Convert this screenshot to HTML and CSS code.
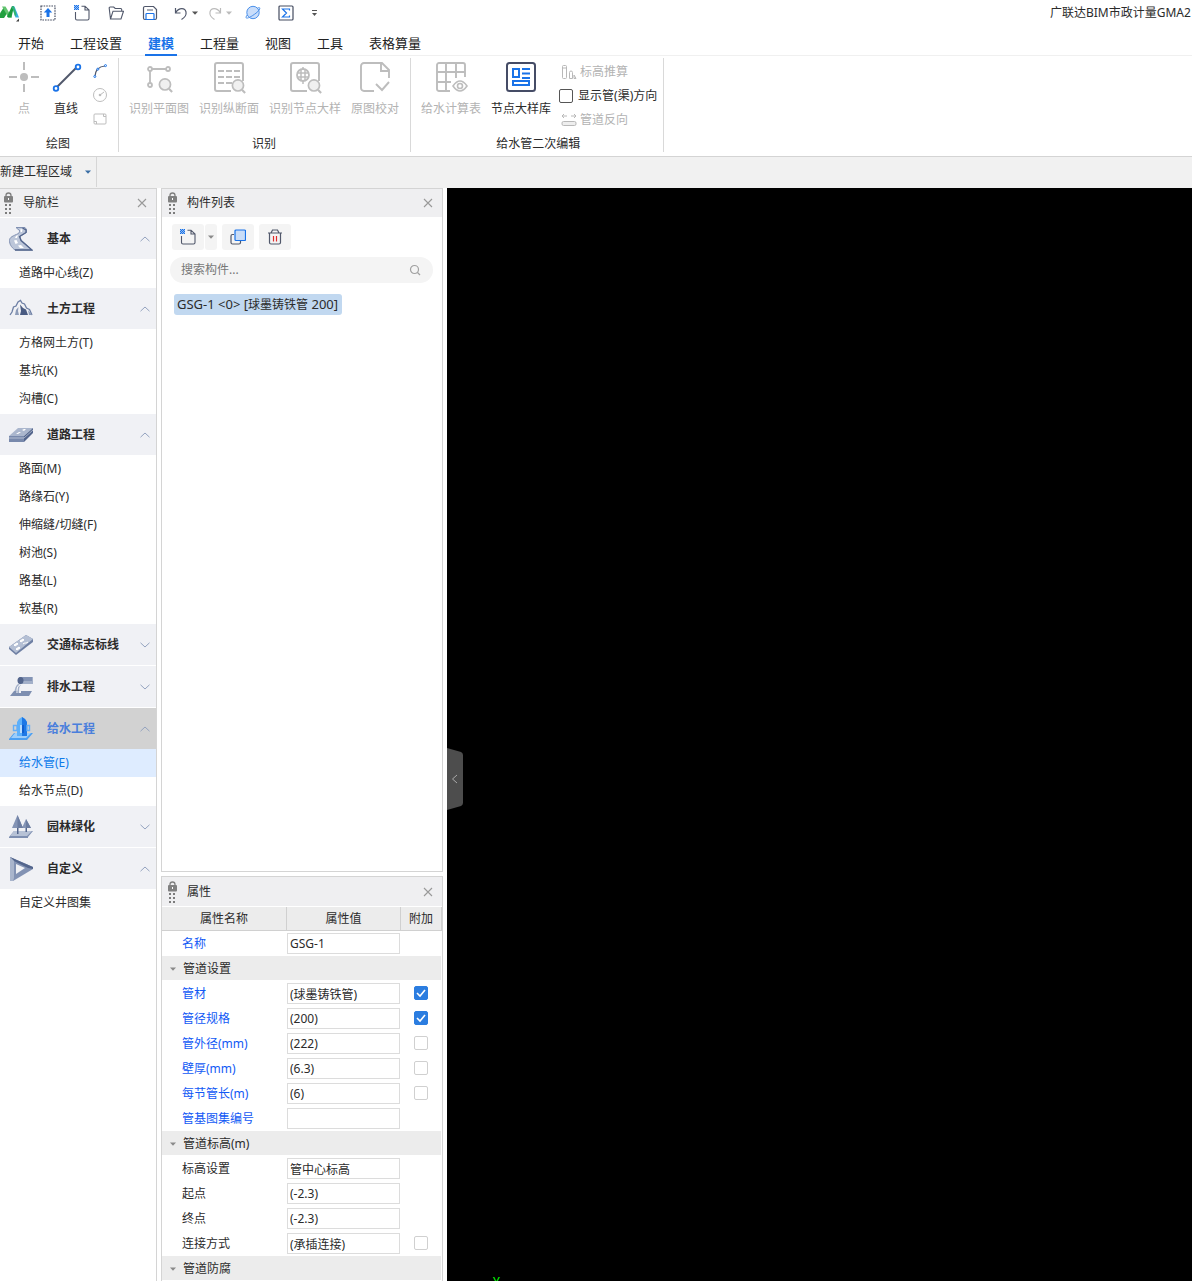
FILE: index.html
```html
<!DOCTYPE html>
<html lang="zh-CN">
<head>
<meta charset="utf-8">
<title>广联达BIM市政计量</title>
<link rel="stylesheet" href="styles.css">
</head>
<body>
<svg class="sprite" aria-hidden="true">
  <symbol id="caret" viewBox="0 0 6 4"><path d="M0 0.5h6L3 3.8z" fill="currentColor"/></symbol>
  <symbol id="close" viewBox="0 0 10 10"><path d="M1 1l8 8M9 1l-8 8" stroke="#999" stroke-width="1.1" fill="none"/></symbol>
  <symbol id="up" viewBox="0 0 10 6"><path d="M0.5 5.2L5 1l4.500 4.200" stroke="#94a3bf" fill="none"/></symbol>
  <symbol id="down" viewBox="0 0 10 6"><path d="M0.500 0.800L5 5l4.500-4.200" stroke="#94a3bf" fill="none"/></symbol>
  <symbol id="grip" viewBox="0 0 9 22">
    <path d="M2 5V3.500a2.500 2.500 0 0 1 5 0V5" stroke="#808080" stroke-width="1.300" fill="none"/>
    <rect x="0" y="4" width="9" height="6.500" rx="1" fill="#808080"/><rect x="4" y="6" width="1" height="2" fill="#fff"/>
    <path d="M1 12h2v2H1zM5 12h2v2H5zM1 16h2v2H1zM5 16h2v2H5zM1 20h2v2H1zM5 20h2v2H5z" fill="#7c7c7c"/>
  </symbol>
  <symbol id="new" viewBox="0 0 16 16">
    <path d="M1.500 7v6.500a1.500 1.500 0 0 0 1.500 1.500h10.500a1.500 1.500 0 0 0 1.500-1.500V5L11 1.200H7.500M11 1.200V5h4" stroke="#51586b" stroke-width="1.100" fill="none"/>
    <path d="M0 0h1v1H0zM2 0h1v1H2zM4 0h1v1H4zM1 1h1v1H1zM3 1h1v1H3zM0 2h1v1H0zM2 2h1v1H2zM4 2h1v1H4zM1 3h1v1H1zM3 3h1v1H3zM0 4h1v1H0zM2 4h1v1H2zM4 4h1v1H4z" fill="#1a73e8"/>
    <path d="M0 0h5v5H0z" fill="#1a73e8" opacity=".45"/>
  </symbol>
  <symbol id="lens" viewBox="0 0 14 14"><circle cx="6.500" cy="6" r="5.200" fill="#f0f0f0" stroke="#bdbdbd" stroke-width="1.600"/><path d="M10.200 10l3 3" stroke="#bdbdbd" stroke-width="2"/></symbol>
</svg>

<header class="titlebar">
  <svg class="logo" viewBox="0 0 20 18">
    <path d="M-3 14L4 3l4 5-4 6z" fill="#22a03f"/><path d="M2 2.500h3.500L12 13.500H8.500z" fill="#62c46f"/>
    <path d="M7 12.500l5-10.500h2L11.500 13.500H8z" fill="#1b9a3e"/><path d="M12 2.500h2.500L19 13.500h-3.500z" fill="#38aee0"/><path d="M12 2.500h2l2.500 8-1.500 2z" fill="#31b46e"/>
    <path d="M19 14.500v3h-3z" fill="#444"/>
  </svg>
  <div class="tools tools-file">
    <button aria-label="上传"><svg viewBox="0 0 16 16"><rect x="1" y="1" width="14" height="14" fill="none" stroke="#454c60" stroke-width="1.200" stroke-dasharray="1.600 1"/><path d="M8 3L3.800 7.500h2.700V12h3V7.500h2.700z" fill="#1a73e8"/></svg></button>
    <button aria-label="新建"><svg viewBox="0 0 16 16"><use href="#new"/></svg></button>
    <button aria-label="打开"><svg viewBox="0 0 16 16"><path d="M2.500 14L1.200 3.200a1 1 0 0 1 1-1.200h3.500l1.500 1.500h5.500a1 1 0 0 1 1 1V6M2.500 14L5 6.200h10.500L13 14z" stroke="#51586b" stroke-width="1.100" fill="none"/></svg></button>
    <button aria-label="保存"><svg viewBox="0 0 16 16"><path d="M1.500 3a1.500 1.500 0 0 1 1.500-1.500h8.500L14.500 4.500V13a1.500 1.500 0 0 1-1.500 1.500H3A1.500 1.500 0 0 1 1.500 13z" stroke="#51586b" stroke-width="1.200" fill="none"/><path d="M5 5h6" stroke="#51586b"/><path d="M4 14.500V9.300a.8.800 0 0 1 .8-.8h6.400a.8.800 0 0 1 .8.800v5.200z" stroke="#1a73e8" stroke-width="1.200" fill="#fff"/></svg></button>
  </div>
  <div class="tools tools-history">
    <button class="split" aria-label="撤销"><svg viewBox="0 0 14 16"><path d="M1.500 3v5h5M1.800 7.500C5 2.500 11 2.500 12 7c.6 3-2 6-4.500 7.500" stroke="#51586b" stroke-width="1.200" fill="none"/></svg><svg class="caret" viewBox="0 0 6 4"><use href="#caret"/></svg></button>
    <button class="split muted" aria-label="恢复"><svg viewBox="0 0 14 16"><path d="M12.500 3v5h-5M12.200 7.500C9 2.500 3 2.500 2 7c-.6 3 2 6 4.500 7.500" stroke="#bbb" stroke-width="1.200" fill="none"/></svg><svg class="caret" viewBox="0 0 6 4"><use href="#caret"/></svg></button>
  </div>
  <div class="tools tools-view">
    <button aria-label="三维"><svg viewBox="0 0 16 16"><circle cx="8" cy="7.500" r="6.200" fill="#c9ddfa" stroke="#4a90ea"/><path d="M12.500 3c4-1.500 2.500 2-1.500 5.200C6 12 1 14.500 1 12.300c0-.8.700-1.600 1.300-2.300" fill="none" stroke="#4a90ea"/></svg></button>
    <button aria-label="汇总"><svg viewBox="0 0 16 16"><rect x="1" y="1" width="14" height="14" rx="1" fill="none" stroke="#454c60" stroke-width="1.200"/><path d="M11.500 5.500V4H4.500l4 4-4 4h7v-1.500" fill="none" stroke="#1a73e8" stroke-width="1.200"/></svg></button>
    <button aria-label="更多"><svg class="more" viewBox="0 0 7 8"><path d="M1 1.500h5" stroke="#555"/><path d="M1 4h5L3.500 7z" fill="#555"/></svg></button>
  </div>
  <h1 class="app-title">广联达BIM市政计量GMA2</h1>
</header>

<nav class="tabs">
  <button>开始</button><button>工程设置</button><button class="active">建模</button><button>工程量</button><button>视图</button><button>工具</button><button>表格算量</button>
</nav>

<section class="ribbon">
  <div class="group group-draw">
    <div class="actions">
      <button class="big" disabled><svg viewBox="0 0 30 30"><circle cx="15" cy="15" r="4" fill="#bdbdbd"/><path d="M0 15h8M22 15h8M15 0v8M15 22v8" stroke="#bdbdbd" stroke-width="2"/></svg><span>点</span></button>
      <button class="big"><svg viewBox="0 0 30 30"><path d="M5 26L26 5" stroke="#51586b" stroke-width="2"/><circle cx="5" cy="26.500" r="2.300" fill="#fff" stroke="#1a73e8" stroke-width="1.800"/><circle cx="27" cy="5" r="2.300" fill="#fff" stroke="#1a73e8" stroke-width="1.800"/></svg><span>直线</span></button>
      <div class="minis">
        <button aria-label="弧线"><svg viewBox="0 0 14 14"><path d="M2 12C2.500 6 6 2.500 12 2" stroke="#51586b" stroke-width="1.200" fill="none"/><g fill="#fff" stroke="#1a73e8"><circle cx="1.800" cy="12.500" r="1"/><circle cx="4.800" cy="5.200" r="1"/><circle cx="12.500" cy="1.600" r="1"/></g></svg></button>
        <button aria-label="圆" disabled><svg viewBox="0 0 14 14"><circle cx="7" cy="7" r="6.500" fill="none" stroke="#bdbdbd"/><path d="M7 7l4-3" stroke="#bdbdbd"/><circle cx="7" cy="7" r="1.300" fill="#bdbdbd"/></svg></button>
        <button aria-label="矩形" disabled><svg viewBox="0 0 14 14"><rect x="1" y="2" width="12" height="10" rx="1" fill="none" stroke="#bdbdbd"/><path d="M1 9.500h2.500V12M10.500 2v2.500H13" fill="none" stroke="#bdbdbd"/></svg></button>
      </div>
    </div>
    <h2>绘图</h2>
  </div>
  <div class="group group-detect">
    <div class="actions">
      <button class="big" disabled><svg viewBox="0 0 30 30"><g fill="none" stroke="#bdbdbd" stroke-width="1.800"><path d="M6 9v12M8 7h12"/><circle cx="6" cy="7" r="2"/><circle cx="24" cy="7" r="2"/><circle cx="6" cy="23" r="2"/></g><path d="M20 7h2" stroke="#bdbdbd" stroke-width="1.800"/><use href="#lens" x="14" y="16" width="15" height="15"/></svg><span>识别平面图</span></button>
      <button class="big" disabled><svg viewBox="0 0 30 30"><path d="M17 29H3a2 2 0 0 1-2-2V3a2 2 0 0 1 2-2h24a2 2 0 0 1 2 2v16" fill="none" stroke="#bdbdbd" stroke-width="2"/><path d="M4 9h22M4 15h22M4 21h14" stroke="#bdbdbd" stroke-width="1.800" stroke-dasharray="6 2"/><use href="#lens" x="17" y="17" width="15" height="15"/></svg><span>识别纵断面</span></button>
      <button class="big" disabled><svg viewBox="0 0 30 30"><path d="M17 29H3a2 2 0 0 1-2-2V3a2 2 0 0 1 2-2h24a2 2 0 0 1 2 2v16" fill="none" stroke="#bdbdbd" stroke-width="2"/><circle cx="13" cy="13" r="6" fill="none" stroke="#bdbdbd" stroke-width="1.800"/><path d="M13 5v3M13 18v4M8 11h10M8 15h10M11 8v10M15 8v10" stroke="#bdbdbd" stroke-width="1.500"/><use href="#lens" x="17" y="17" width="15" height="15"/></svg><span>识别节点大样</span></button>
      <button class="big" disabled><svg viewBox="0 0 30 30"><path d="M14 29H4a3 3 0 0 1-3-3V4a3 3 0 0 1 3-3h18l7 7v8M21 1v8h8M16 22l6 6 7-8" fill="none" stroke="#bdbdbd" stroke-width="1.900"/></svg><span>原图校对</span></button>
    </div>
    <h2>识别</h2>
  </div>
  <div class="group group-edit">
    <div class="actions">
      <button class="big" disabled><svg viewBox="0 0 30 30"><path d="M14 29H3a2 2 0 0 1-2-2V3a2 2 0 0 1 2-2h24a2 2 0 0 1 2 2v12M1 10h28M1 20h14M10 1v28M20 1v15" fill="none" stroke="#bdbdbd" stroke-width="1.900"/><path d="M17 24q7-10 14 0q-7 10-14 0z" fill="#fff" stroke="#bdbdbd" stroke-width="1.600"/><circle cx="24" cy="24" r="2.500" fill="none" stroke="#bdbdbd" stroke-width="1.600"/></svg><span>给水计算表</span></button>
      <button class="big"><svg viewBox="0 0 30 30"><rect x="1" y="1" width="28" height="28" rx="2.500" fill="#fff" stroke="#454c66" stroke-width="2"/><path d="M7 7h6v8H7zM7 19h16v4H7z" fill="none" stroke="#1a73e8" stroke-width="2"/><path d="M16 7h8M16 11.500h8M16 16h8" stroke="#1a73e8" stroke-width="1.800"/></svg><span>节点大样库</span></button>
      <div class="lines">
        <button disabled><svg viewBox="0 0 16 16"><g fill="none" stroke="#b8b8b8"><rect x="1.500" y="1.500" width="4" height="13" rx="1"/><path d="M1.500 4h4M8.500 14.500V8.500a1.500 1.500 0 0 1 3 0v6z"/><path d="M13 11l2 3.500h-2z"/></g></svg>标高推算</button>
        <label><input type="checkbox">显示管(渠)方向</label>
        <button disabled><svg viewBox="0 0 16 16"><g fill="none" stroke="#b8b8b8"><path d="M1 4h5M3 2L1 4l2 2M10 4h5M13 2l2 2-2 2"/><rect x="1" y="9.500" width="14" height="4" rx="1.500" fill="#eee"/></g></svg>管道反向</button>
      </div>
    </div>
    <h2>给水管二次编辑</h2>
  </div>
</section>

<div class="regionbar">
  <div class="region">
    <select aria-label="工程区域"><option>新建工程区域</option></select>
    <svg class="caret" viewBox="0 0 6 4"><use href="#caret"/></svg>
  </div>
</div>

<main class="workspace">
  <aside class="nav">
    <div class="panel-head"><svg class="grip"><use href="#grip"/></svg><h2>导航栏</h2><button aria-label="关闭"><svg><use href="#close"/></svg></button></div>

    <section><button class="cat"><svg class="pic" viewBox="0 0 24 24"><path d="M7 .5h9l1.500 2v3L11 9.500l1 3.500 11 10H6C2 20 .5 17 .5 13.500S4 9 9.500 6.500L11 4z" fill="#bcc6d9" stroke="#8090b2"/><path d="M13.500 1l3.500 2v2.500L10.500 9.500l1.500 4 11 9.500H6" fill="none" stroke="#53658c" stroke-width="1.300"/><path d="M11.500 2l2 .5-.5 2.500h-1.500zM7 9l2-1-1 3H6zM5 13.500l2.500-.5 1.500 3-2.500 1zM9 18.500l3-.5 3 3h-4z" fill="#fff"/></svg>基本<svg class="chev"><use href="#up"/></svg></button>
      <ul><li><a href="#">道路中心线(Z)</a></li></ul></section>

    <section><button class="cat"><svg class="pic" viewBox="0 0 24 24"><path d="M1 18l2-3 1.500-5L7 9l2-4 2.500-1.500L13 6l2.500 1 2 4 3 1.500L23 18" fill="none" stroke="#6d7fa4" stroke-width="1.300"/><path d="M11 7.500l3 3.500 3 1.500 2 5.500h-8l1-4z" fill="#495b82"/><path d="M6 18l1-5 2.500-3-.5 4 1 4zM19 13l4 5h-3z" fill="#8c9bb8"/></svg>土方工程<svg class="chev"><use href="#up"/></svg></button>
      <ul><li><a href="#">方格网土方(T)</a></li><li><a href="#">基坑(K)</a></li><li><a href="#">沟槽(C)</a></li></ul></section>

    <section><button class="cat"><svg class="pic" viewBox="0 0 24 24"><path d="M0 13L9 5h15L15 13z" fill="#aab6cd"/><path d="M15 13l9-8v5l-9 9z" fill="#53658c"/><path d="M0 13h15v6H0z" fill="#7889ac"/><path d="M0 15h15l9-8" stroke="#dbe1ec" stroke-width=".6" fill="none"/><path d="M7 11l3-2h2l-3 2zM13 7l2-1h2l-2 2z" fill="#fff"/></svg>道路工程<svg class="chev"><use href="#up"/></svg></button>
      <ul><li><a href="#">路面(M)</a></li><li><a href="#">路缘石(Y)</a></li><li><a href="#">伸缩缝/切缝(F)</a></li><li><a href="#">树池(S)</a></li><li><a href="#">路基(L)</a></li><li><a href="#">软基(R)</a></li></ul></section>

    <section><button class="cat"><svg class="pic" viewBox="0 0 24 24"><path d="M0 14L17 2l7 4v3L7 22l-7-6z" fill="#6e7fa3"/><path d="M0 14L17 2l7 4L7 20z" fill="#b4bfd4"/><path d="M5 12l3-2 1 1-3 2zM11 8l3-2 1 1-3 2zM7 16l3-2 1 1-3 2zM14 11c2-2 3 0 5-2" fill="#fff" stroke="#fff"/></svg>交通标志标线<svg class="chev"><use href="#down"/></svg></button></section>

    <section><button class="cat"><svg class="pic" viewBox="0 0 24 24"><path d="M10 2h14v7H10z" fill="#a3b0c9"/><path d="M11 2h12v4H11z" fill="#8393b4"/><ellipse cx="11.500" cy="5.500" rx="3" ry="3.500" fill="#53658c"/><path d="M5 18c1-5 2-8 4-9l3 1c-2 1-2 4-2 8z" fill="#a3b0c9"/><path d="M5 16h4v2h3v-2h11l-3 5H1z" fill="#7e8fb1"/><path d="M8 18c0-4 0-7 3-8" stroke="#fff" fill="none"/></svg>排水工程<svg class="chev"><use href="#down"/></svg></button></section>

    <section><button class="cat current"><svg class="pic" viewBox="0 0 24 24"><path d="M0 22l5-6h19l-6 7H0z" fill="#4b9ff2"/><path d="M2 21l4-5h16l-5 5z" fill="#9ccdfa"/><path d="M8 19V5l2-3 3-2 3 2 2 3v14z" fill="#5db0fa"/><path d="M13 0l3 2 2 3v14h-5z" fill="#1d78e6"/><path d="M4.500 8.500H8v5H4.500zM18 8.500h2.500v5H18z" fill="none" stroke="#64aef7" stroke-width="1.400"/><path d="M11 8h4v8h-4z" fill="#b5dcff"/><path d="M13 8h2v8h-2z" fill="#0f5fd0"/></svg>给水工程<svg class="chev"><use href="#up"/></svg></button>
      <ul><li><a href="#" class="current">给水管(E)</a></li><li><a href="#">给水节点(D)</a></li></ul></section>

    <section><button class="cat"><svg class="pic" viewBox="0 0 24 24"><path d="M0 22l5-6h19l-5 6v1H0z" fill="#7e8fb1"/><path d="M1 21l4-5h18l-5 5z" fill="#b7c2d6"/><path d="M8.500 0L3 13h11zM17 4l-4 9h9z" fill="#8494b5"/><path d="M8.500 0v13H14zM17 4v9h5z" fill="#6c7da1"/><path d="M8 13h1.500v6H8zM16.500 13H18v4h-1.500z" fill="#53658c"/></svg>园林绿化<svg class="chev"><use href="#down"/></svg></button></section>

    <section><button class="cat"><svg class="pic" viewBox="0 0 24 24"><path d="M1 0l23 10v2L4 24H1z" fill="#8292b3"/><path d="M1 0l23 10v2l-5-1L5 4z" fill="#53658c"/><path d="M7 7l9 4-9 6z" fill="#f0f1f5"/><path d="M1 0l4 4v17l-1 3H1z" fill="#a9b5cc"/></svg>自定义<svg class="chev"><use href="#up"/></svg></button>
      <ul><li><a href="#">自定义井图集</a></li></ul></section>
  </aside>

  <div class="side">
    <section class="panel components">
      <div class="panel-head"><svg class="grip"><use href="#grip"/></svg><h2>构件列表</h2><button aria-label="关闭"><svg><use href="#close"/></svg></button></div>
      <div class="toolbar">
        <div class="pair"><button class="tool" aria-label="新建构件"><svg viewBox="0 0 16 16"><use href="#new"/></svg></button><button class="tool drop" aria-label="新建选项"><svg class="caret" viewBox="0 0 6 4"><use href="#caret"/></svg></button></div>
        <button class="tool" aria-label="复制"><svg viewBox="0 0 16 16"><path d="M4 5.500H2.500A1.500 1.500 0 0 0 1 7v6.500A1.500 1.500 0 0 0 2.500 15H9a1.500 1.500 0 0 0 1.500-1.500V12" fill="none" stroke="#51586b" stroke-width="1.200"/><rect x="5" y="1" width="10.500" height="10.500" rx="1" fill="#c9ddf8" stroke="#1a73e8" stroke-width="1.200"/></svg></button>
        <button class="tool" aria-label="删除"><svg viewBox="0 0 16 16"><path d="M1 4h14M4 4l1.500-3h5L12 4M2.500 4v9.500A1.500 1.500 0 0 0 4 15h8a1.500 1.500 0 0 0 1.500-1.500V4" fill="none" stroke="#51586b" stroke-width="1.200"/><path d="M6.500 7v5.500M9.500 7v5.500" stroke="#e02a2a" stroke-width="1.200"/></svg></button>
      </div>
      <label class="search"><input type="text" placeholder="搜索构件..." aria-label="搜索构件"><svg viewBox="0 0 12 12"><circle cx="5.500" cy="5.500" r="4" fill="none" stroke="#a0a0a0" stroke-width="1.200"/><path d="M8.500 8.500L11 11" stroke="#a0a0a0" stroke-width="1.200"/></svg></label>
      <ul class="items"><li><button><span class="code">GSG-1 &lt;0&gt; [</span>球墨铸铁管<span class="code"> 200]</span></button></li></ul>
    </section>

    <section class="panel props">
      <div class="panel-head"><svg class="grip"><use href="#grip"/></svg><h2>属性</h2><button aria-label="关闭"><svg><use href="#close"/></svg></button></div>
      <table>
        <colgroup><col class="c-name"><col class="c-value"><col></colgroup>
        <thead><tr><th>属性名称</th><th>属性值</th><th>附加</th></tr></thead>
        <tbody>
          <tr class="key"><th><label for="p1">名称</label></th><td><input id="p1" type="text" value="GSG-1"></td><td></td></tr>
          <tr class="sec"><th colspan="3"><button><svg class="caret" viewBox="0 0 6 4"><use href="#caret"/></svg>管道设置</button></th></tr>
          <tr class="key"><th><label for="p2">管材</label></th><td><input id="p2" type="text" value="(球墨铸铁管)"></td><td><input type="checkbox" checked aria-label="附加管材"></td></tr>
          <tr class="key"><th><label for="p3">管径规格</label></th><td><input id="p3" type="text" value="(200)"></td><td><input type="checkbox" checked aria-label="附加管径规格"></td></tr>
          <tr class="key"><th><label for="p4">管外径(mm)</label></th><td><input id="p4" type="text" value="(222)"></td><td><input type="checkbox" aria-label="附加管外径"></td></tr>
          <tr class="key"><th><label for="p5">壁厚(mm)</label></th><td><input id="p5" type="text" value="(6.3)"></td><td><input type="checkbox" aria-label="附加壁厚"></td></tr>
          <tr class="key"><th><label for="p6">每节管长(m)</label></th><td><input id="p6" type="text" value="(6)"></td><td><input type="checkbox" aria-label="附加每节管长"></td></tr>
          <tr class="key"><th><label for="p7">管基图集编号</label></th><td><input id="p7" type="text" value=""></td><td></td></tr>
          <tr class="sec"><th colspan="3"><button><svg class="caret" viewBox="0 0 6 4"><use href="#caret"/></svg>管道标高(m)</button></th></tr>
          <tr><th><label for="p8">标高设置</label></th><td><input id="p8" type="text" value="管中心标高"></td><td></td></tr>
          <tr><th><label for="p9">起点</label></th><td><input id="p9" type="text" value="(-2.3)"></td><td></td></tr>
          <tr><th><label for="p10">终点</label></th><td><input id="p10" type="text" value="(-2.3)"></td><td></td></tr>
          <tr><th><label for="p11">连接方式</label></th><td><input id="p11" type="text" value="(承插连接)"></td><td><input type="checkbox" aria-label="附加连接方式"></td></tr>
          <tr class="sec"><th colspan="3"><button><svg class="caret" viewBox="0 0 6 4"><use href="#caret"/></svg>管道防腐</button></th></tr>
        </tbody>
      </table>
    </section>
  </div>

  <section class="canvas">
    <button class="handle" aria-label="收起"><svg viewBox="0 0 16 62"><path d="M0 0l14 4q2 1 2 3v48q0 2-2 3L0 62z" fill="#4d4d4d"/><path d="M10 27l-4.500 4 4.500 4" fill="none" stroke="#aaa"/></svg></button>
    <span class="axis">Y</span>
  </section>
</main>
</body>
</html>
```
FILE: styles.css
```css
* { box-sizing: border-box; }
body {
  margin: 0;
  min-height: 100vh;
  display: flex;
  flex-direction: column;
  background: #fff;
  color: #2b2b2b;
  font: 12px/16px "Noto Sans", "Noto Sans CJK SC", sans-serif;
}
button, input, select { font: inherit; color: inherit; }
button { margin: 0; padding: 0; border: 0; background: none; }
h1, h2 { margin: 0; font-size: 12px; font-weight: 400; }
ul { margin: 0; padding: 0; list-style: none; }
a { color: inherit; text-decoration: none; }
svg { display: block; flex: none; }
.sprite { position: absolute; width: 0; height: 0; }
.caret { width: 6px; height: 4px; color: #8a8a8a; }

/* Title bar */
.titlebar { display: flex; align-items: center; height: 26px; overflow: hidden; }
.logo { width: 20px; height: 18px; margin-right: 20px; }
.tools { display: flex; align-items: center; gap: 18px; }
.tools svg { width: 16px; height: 16px; }
.tools-history { gap: 10px; margin: 0 13px 0 16px; }
.tools-view { gap: 17px; }
.split { display: flex; align-items: center; gap: 4px; }
.tools .split svg { width: 14px; }
.tools .split .caret { width: 6px; height: 4px; color: #555; }
.tools .muted .caret { color: #bbb; }
.tools .more { width: 7px; height: 8px; }
.app-title { flex: 0 0 142px; margin-left: auto; white-space: nowrap; }

/* Tabs */
.tabs { display: flex; gap: 20px; height: 30px; padding: 7px 0 0 15px; border-bottom: 1px solid #f0f0f0; }
.tabs button { display: flex; height: 23px; padding: 0 3px; border-bottom: 2px solid transparent; font-size: 13px; line-height: 20px; color: #222; }
.tabs .active { border-color: #1a73e8; color: #1a73e8; font-weight: 700; }

/* Ribbon */
.ribbon { display: flex; padding: 2px 0 4px; border-bottom: 1px solid #d4d4d4; }
.group { display: flex; flex-direction: column; justify-content: space-between; height: 94px; padding: 4px 10px 0; border-right: 1px solid #d9d9d9; }
.group-draw { padding: 4px 11px 0 9px; }
.group-detect { padding-right: 11px; }
.group-edit { padding: 4px 6px 0 8px; }
.group h2 { text-align: center; }
.actions { display: flex; gap: 10px; }
.group-draw .actions { gap: 12px; }
.group-edit .actions { gap: 6px; }
.big { display: flex; flex-direction: column; align-items: center; gap: 9px; min-width: 30px; white-space: nowrap; }
.group-edit .big { min-width: 64px; }
.big svg { width: 30px; height: 30px; overflow: visible; }
.ribbon button:disabled { color: #b3b3b3; }
.minis { display: flex; flex-direction: column; gap: 10px; padding-top: 2px; }
.minis svg { width: 14px; height: 14px; }
.lines { display: flex; flex-direction: column; gap: 8px; padding-top: 2px; }
.lines button, .lines label { display: flex; align-items: center; gap: 3px; white-space: nowrap; }
.lines button { padding-left: 2px; }
.lines label { gap: 5px; }
.lines svg { width: 16px; height: 16px; }

input[type="checkbox"] {
  display: block;
  appearance: none;
  width: 14px;
  height: 14px;
  margin: 0;
  border: 1px solid #555;
  border-radius: 2px;
  background: #fff;
}

/* Region bar */
.regionbar { display: flex; height: 31px; padding-bottom: 1px; background: #f1f1f1; }
.region { position: relative; width: 97px; border-right: 1px solid #d6d6d6; }
.region select { appearance: none; width: 100%; height: 100%; padding: 0; border: 0; background: none; }
.region .caret { position: absolute; right: 5px; top: 13px; color: #3a6ea5; pointer-events: none; }

/* Workspace */
.workspace { flex: 1; display: flex; }
.panel-head { display: flex; align-items: center; height: 28px; padding: 0 9px 0 6px; background: #efeff1; }
.panel-head h2 { flex: 1; padding-left: 10px; }
.panel-head button svg { width: 10px; height: 10px; }
.grip { width: 9px; height: 22px; }

.nav { flex: none; width: 157px; border: solid #d4d4d4; border-width: 1px 1px 0 0; }
.nav .panel-head { padding-left: 4px; margin-bottom: 1px; }
.nav section { margin-bottom: 1px; }
.cat { display: flex; align-items: center; width: 100%; height: 41px; padding: 0 6px 0 9px; gap: 14px; background: #f0f1f5; font-weight: 700; text-align: left; }
.cat.current { background: #d2d2d2; color: #4a7fdc; }
.pic { width: 24px; height: 24px; }
.chev { width: 10px; height: 6px; margin-left: auto; }
.nav a { display: block; height: 28px; padding-left: 19px; line-height: 28px; }
.nav a.current { background: #deecff; color: #0f7bea; }

.side { flex: none; display: flex; flex-direction: column; gap: 4px; width: 282px; margin: 0 4px; }
.panel { border: 1px solid #d4d4d4; }
.components { flex: 1; }
.toolbar { display: flex; gap: 5px; padding: 7px 10px; }
.pair { display: flex; gap: 1px; }
.tool { display: flex; align-items: center; justify-content: center; width: 32px; height: 26px; border-radius: 3px; background: #f4f4f4; }
.tool svg { width: 16px; height: 16px; }
.tool.drop { width: 12px; }
.tool .caret { width: 6px; height: 4px; }
.search { display: flex; align-items: center; height: 26px; margin: 0 9px 11px 8px; padding: 0 12px 0 11px; border-radius: 13px; background: #f4f4f4; }
.search input { flex: 1; min-width: 0; padding: 0; border: 0; outline: 0; background: none; }
.search input::placeholder { color: #777; opacity: 1; }
.search svg { width: 12px; height: 12px; }
.items { padding: 0 12px; }
.items button { height: 21px; padding: 0 4px 0 3px; border-radius: 3px; background: #c1d8f0; white-space: pre; }
.code { font-size: 13px; }

/* Properties */
.props { border-bottom: 0; }
.props .panel-head { height: 29px; margin-bottom: 1px; }
.props table { width: 100%; border-collapse: separate; border-spacing: 0; table-layout: fixed; }
.c-name { width: 125px; }
.c-value { width: 114px; }
.props th, .props td { height: 25px; padding: 0; font-weight: 400; text-align: left; }
.props thead th { height: 24px; padding-top: 1px; border: solid #d0d0d0; border-width: 0 1px 1px 0; background: #ececec; text-align: center; }
.props tbody th { padding-left: 20px; }
.props .key th { color: #1259f5; }
.props tbody .sec th { padding: 0 1px 1px 0; }
.sec button { display: flex; align-items: center; gap: 7px; width: 100%; height: 24px; padding: 1px 0 0 8px; background: #ececec; }
.props input[type="text"] { display: block; width: 113px; height: 21px; padding: 0 2px; border: 1px solid #dcdcdc; background: #fff; }
.props td:last-child { padding: 0 2px 1px 0; }
.props input[type="checkbox"] { margin: 0 auto; border-color: #d0d0d0; }
.props input[type="checkbox"]:checked {
  border-color: #2b7de0;
  background: #2b7de0 url("data:image/svg+xml,%3Csvg xmlns='http://www.w3.org/2000/svg' viewBox='0 0 12 12'%3E%3Cpath d='M2 6l3 3 5-6' fill='none' stroke='white' stroke-width='1.6'/%3E%3C/svg%3E") center / 12px 12px;
}

/* Drawing area */
.canvas { position: relative; flex: 1; overflow: hidden; background: #000; }
.handle { position: absolute; left: 0; top: 560px; }
.handle svg { width: 16px; height: 62px; }
.axis { position: absolute; left: 46px; bottom: -9px; color: #0f0; }
```
